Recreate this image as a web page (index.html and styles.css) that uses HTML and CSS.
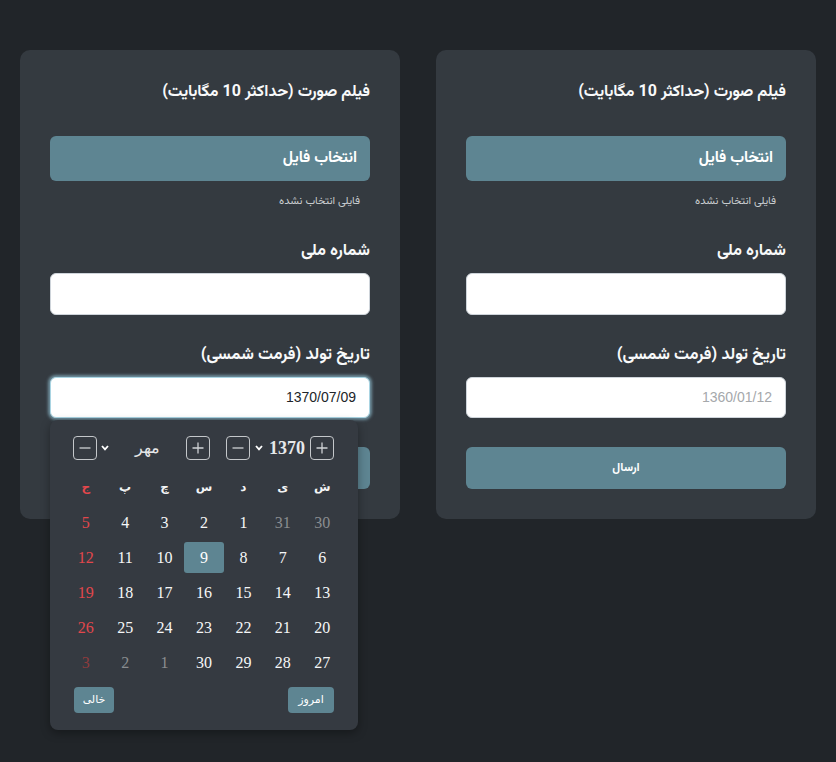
FILE: index.html
```html
<!DOCTYPE html>
<html lang="fa" dir="rtl">
<head>
<meta charset="utf-8">
<title>فرم</title>
<link rel="stylesheet" href="styles.css">
</head>
<body>
<div class="page">
  <form class="card">
    <div class="title">فیلم صورت (حداکثر 10 مگابایت)</div>
    <div class="file-btn">انتخاب فایل</div>
    <div class="file-note">فایلی انتخاب نشده</div>
    <div class="label">شماره ملی</div>
    <div class="input"></div>
    <div class="label">تاریخ تولد (فرمت شمسی)</div>
    <div class="input placeholder">1360/01/12</div>
    <div class="submit">ارسال</div>
  </form>

  <form class="card">
    <div class="title">فیلم صورت (حداکثر 10 مگابایت)</div>
    <div class="file-btn">انتخاب فایل</div>
    <div class="file-note">فایلی انتخاب نشده</div>
    <div class="label">شماره ملی</div>
    <div class="input"></div>
    <div class="label">تاریخ تولد (فرمت شمسی)</div>
    <div class="date-wrap">
      <div class="input focused">1370/07/09</div>
      <div class="picker">
        <div class="picker-head">
          <div class="group year">
            <span class="step"><svg viewBox="0 0 24 24" width="24" height="24"><path d="M6 12h12M12 6v12" stroke="#d0d3d6" stroke-width="1.4" fill="none"/></svg></span>
            <span class="sel year-sel"><span class="sel-text">1370</span><svg class="chev" viewBox="0 0 8 6" width="8" height="6"><polyline points="1,1 4,4.4 7,1" stroke="#fff" stroke-width="1.8" fill="none"/></svg></span>
            <span class="step"><svg viewBox="0 0 24 24" width="24" height="24"><path d="M6 12h12" stroke="#d0d3d6" stroke-width="1.4" fill="none"/></svg></span>
          </div>
          <div class="group month">
            <span class="step"><svg viewBox="0 0 24 24" width="24" height="24"><path d="M6 12h12M12 6v12" stroke="#d0d3d6" stroke-width="1.4" fill="none"/></svg></span>
            <span class="sel month-sel"><span class="sel-text month-text">مهر</span><svg class="chev" viewBox="0 0 8 6" width="8" height="6"><polyline points="1,1 4,4.4 7,1" stroke="#fff" stroke-width="1.8" fill="none"/></svg></span>
            <span class="step"><svg viewBox="0 0 24 24" width="24" height="24"><path d="M6 12h12" stroke="#d0d3d6" stroke-width="1.4" fill="none"/></svg></span>
          </div>
        </div>
        <div class="grid weekdays">
          <span>ش</span><span>ی</span><span>د</span><span>س</span><span>چ</span><span>پ</span><span class="fri">ج</span>
        </div>
        <div class="grid days">
          <span class="other">30</span><span class="other">31</span><span>1</span><span>2</span><span>3</span><span>4</span><span class="fri">5</span>
          <span>6</span><span>7</span><span>8</span><span class="selected">9</span><span>10</span><span>11</span><span class="fri">12</span>
          <span>13</span><span>14</span><span>15</span><span>16</span><span>17</span><span>18</span><span class="fri">19</span>
          <span>20</span><span>21</span><span>22</span><span>23</span><span>24</span><span>25</span><span class="fri">26</span>
          <span>27</span><span>28</span><span>29</span><span>30</span><span class="other">1</span><span class="other">2</span><span class="other-fri">3</span>
        </div>
        <div class="picker-foot">
          <span class="foot-btn today">امروز</span>
          <span class="foot-btn clear">خالی</span>
        </div>
      </div>
    </div>
    <div class="submit">ارسال</div>
  </form>
</div>
</body>
</html>
```

FILE: styles.css
```css
* { box-sizing: border-box; }

html, body {
  margin: 0;
  padding: 0;
  background: #212529;
}

body {
  direction: rtl;
  min-height: 762px;
  font-family: "Vazirmatn", "Noto Sans Arabic", "DejaVu Sans", sans-serif;
  color: #f8f9fa;
}

.page {
  display: flex;
  gap: 36px;
  padding: 50px 20px;
  min-height: 762px;
  align-items: flex-start;
}

.card {
  width: 380px;
  background: #343a40;
  border-radius: 10px;
  padding: 31px 30px 30px;
  display: flex;
  flex-direction: column;
  margin: 0;
}

.title {
  font-size: 16px;
  font-weight: bold;
  line-height: 24px;
  margin-bottom: 31px;
}

.file-btn {
  height: 45px;
  background: #5e8592;
  border-radius: 6px;
  padding: 0 13px;
  font-size: 15.5px;
  font-weight: bold;
  line-height: 45px;
  color: #fff;
}

.file-note {
  font-size: 11px;
  line-height: 14px;
  color: #c9cccf;
  margin-top: 14px;
  padding-right: 10px;
}

.label {
  font-size: 16.5px;
  font-weight: bold;
  line-height: 24px;
  margin-top: 30px;
  margin-bottom: 10px;
}

.input {
  height: 42px;
  background: #fff;
  border: 1px solid #ced4da;
  border-radius: 6px;
  padding: 0 13px;
  font-family: "Liberation Sans", Arial, sans-serif;
  font-size: 14px;
  line-height: 40px;
  color: #212529;
}

.input + .label { margin-top: 28px; margin-bottom: 10px; }

.date-wrap { position: relative; }
.date-wrap .input { height: 41px; line-height: 39px; }

.placeholder { color: #a5a8ab; height: 41px; line-height: 39px; }

.focused {
  border-color: #a9d4e2;
  box-shadow: 0 0 3px 2px rgba(160, 215, 235, 0.55);
}

.submit {
  margin-top: 29px;
  height: 42px;
  background: #5e8592;
  border-radius: 6px;
  text-align: center;
  font-size: 12px;
  font-weight: bold;
  line-height: 42px;
  color: #fff;
}

/* date picker popup */
.picker {
  position: absolute;
  top: 43px;
  left: 0;
  width: 308px;
  height: 310px;
  background: #353a41;
  border-radius: 8px;
  box-shadow: 0 3px 10px rgba(0, 0, 0, 0.35);
  padding: 16px 0 16px;
  z-index: 5;
  font-family: "Liberation Serif", "Times New Roman", serif;
}

.picker-head {
  display: flex;
  align-items: center;
  gap: 16px;
  padding: 0 24px 0 23px;
  height: 24px;
}

.group {
  display: flex;
  align-items: center;
}

.step {
  width: 24px;
  height: 24px;
  border: 1px solid #c4c7ca;
  border-radius: 4px;
  display: flex;
  align-items: center;
  justify-content: center;
}
.step svg { width: 22px; height: 22px; }

.sel {
  display: flex;
  align-items: center;
  height: 24px;
}

.year-sel {
  width: 60px;
  padding: 0 5px;
  gap: 6px;
}

.sel-text {
  font-size: 18px;
  font-weight: bold;
  color: #e6e8ea;
  line-height: 24px;
}

.month-sel {
  width: 89px;
  padding-left: 4px;
}
.month-text {
  flex: 1;
  text-align: center;
  font-size: 16px;
  font-weight: normal;
  color: #e6e7e8;
}

.chev { flex: none; }

.grid {
  display: grid;
  grid-template-columns: repeat(7, 1fr);
  padding: 0 16px;
}

.weekdays {
  margin-top: 10px;
  height: 35px;
}
.weekdays span {
  text-align: center;
  line-height: 35px;
  font-family: "DejaVu Sans", sans-serif;
  font-size: 12px;
  font-weight: bold;
  color: #f3f4f5;
}
.weekdays .fri { color: #e2474c; }

.days span {
  height: 31px;
  margin: 2px 0;
  line-height: 31px;
  text-align: center;
  font-size: 16px;
  color: #f6f7f8;
  border-radius: 3px;
}

.days .other { color: #8a8d90; }
.days .fri { color: #e2474c; }
.days .other-fri { color: #8e3a3d; }

.days .selected {
  background: #5e8592;
  color: #fff;
}

.picker-foot {
  display: flex;
  justify-content: space-between;
  padding: 0 24px;
  margin-top: 7px;
}

.foot-btn {
  height: 26px;
  border-radius: 4px;
  background: #5e8592;
  color: #fff;
  font-family: "DejaVu Sans", sans-serif;
  font-size: 11px;
  line-height: 26px;
  text-align: center;
}
.today { width: 46px; }
.clear { width: 40px; }
```
